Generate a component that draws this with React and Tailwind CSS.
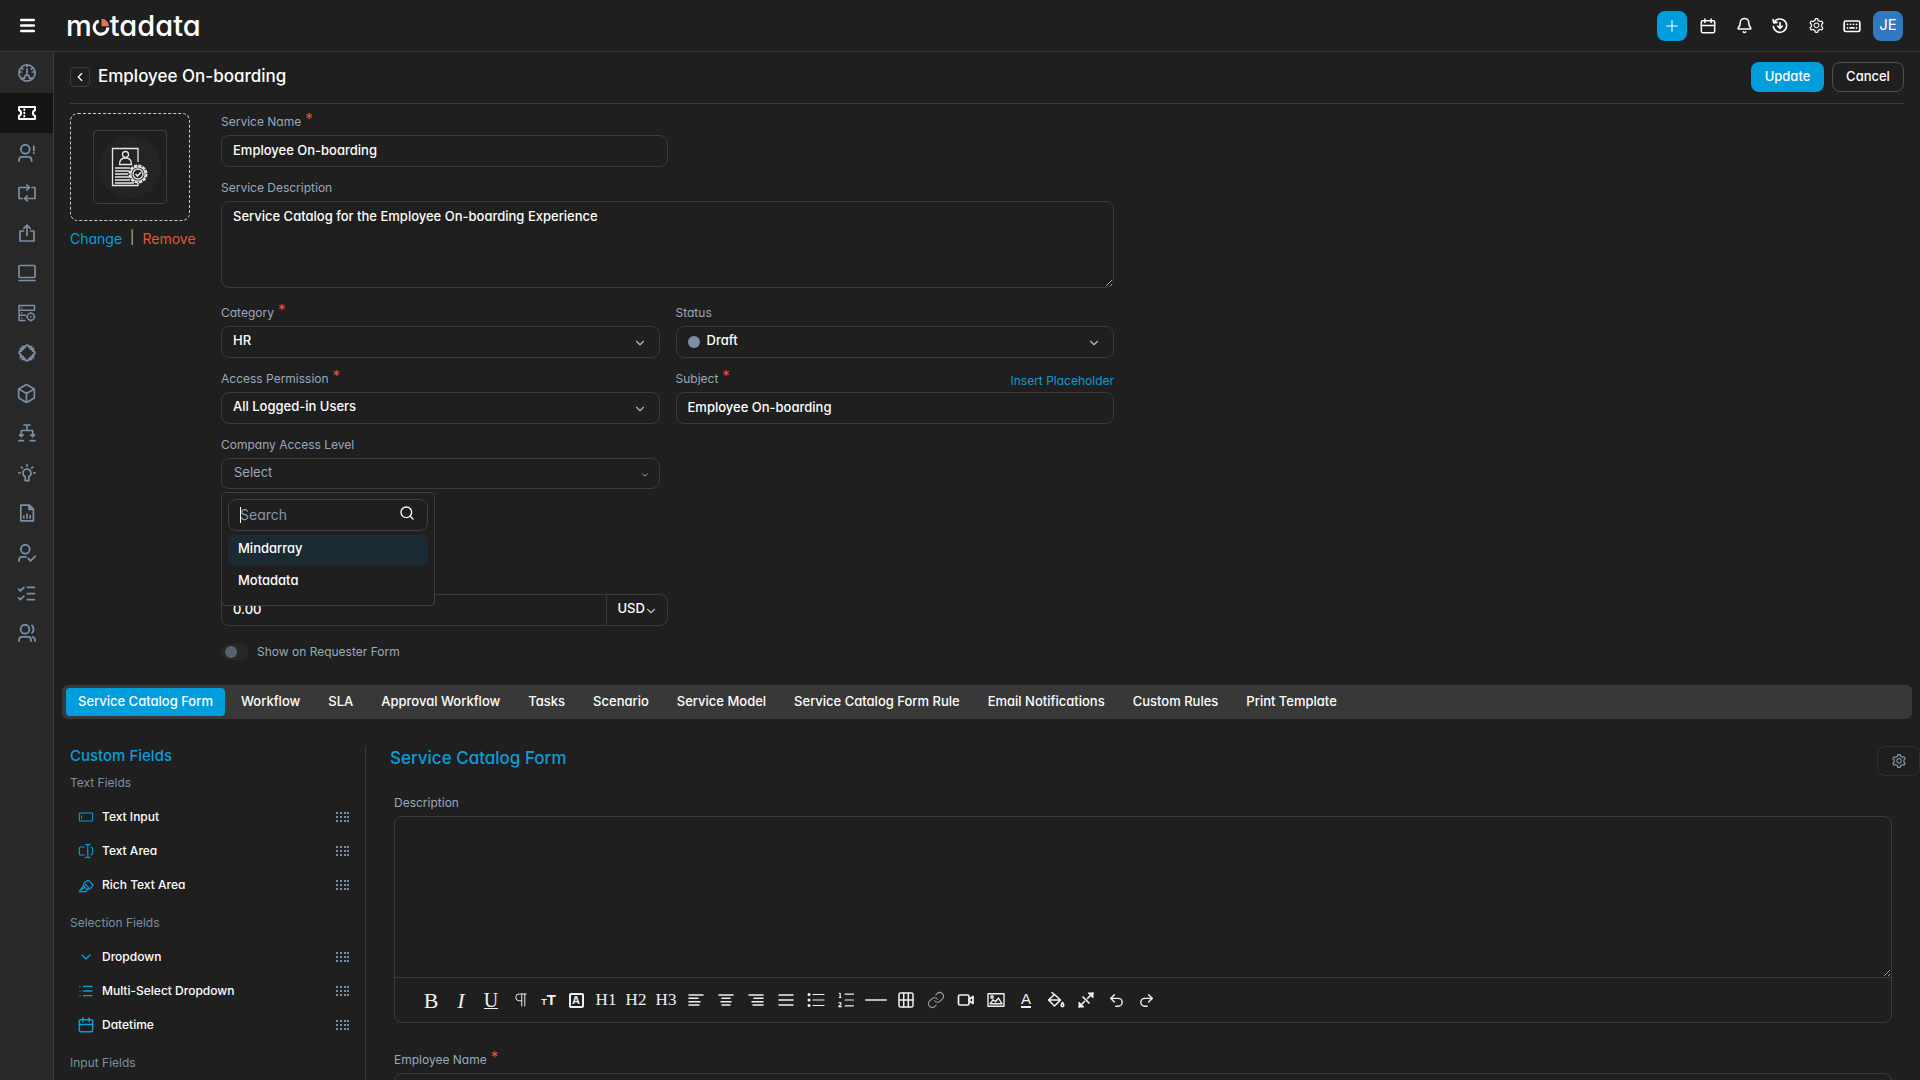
import { useState } from "react";
import { Box, ListChecks, ChevronDown, ChevronLeft, Search, Menu, Plus, Bell, Pilcrow, Link as LinkIcon, Undo2, Redo2, List, ListOrdered, TextCursorInput } from "lucide-react";
import { AiOutlineSetting } from "react-icons/ai";

const Svg = ({ size = 18, box = 18, width = 1.6, className, children }) => (
  <svg width={size} height={size} viewBox={`0 0 ${box} ${box}`} fill="none" stroke="currentColor" strokeWidth={width}
    strokeLinecap="round" strokeLinejoin="round" className={className} aria-hidden="true">
    {children}
  </svg>
);

const sideItems = [
  { name: "Dashboard", icon: <Svg width={1.7}><circle cx="9" cy="9" r="8.1" /><path d="M9 5.2v6M9 1.5v1.2M2 8h1.6M14.4 8H16M4 4.3l.8.8M14 4.3l-.8.8M3.4 14.3h3.2a2.5 2.5 0 1 1 4.8 0h3.2" /></Svg> },
  { name: "Requests", icon: <Svg width={2}><path d="M1 3h16v3.2c-1.4.4-2.1 1.4-2.1 2.8s.7 2.4 2.1 2.8V15H1v-3.2c1.4-.4 2.1-1.4 2.1-2.8S2.4 6.6 1 6.2z" /><path d="M6.3 5.5v.6M6.3 8.7v.6M6.3 11.9v.6" /></Svg> },
  { name: "Problems", icon: <Svg width={1.8}><circle cx="7.3" cy="5.2" r="4.4" /><path d="M1 17v-.8c0-2 1.5-3.3 3.3-3.3h6c1.800 0 3.300 1.300 3.300 3.300v.8M15.800 2.500v4M15.800 9v.2" /></Svg> },
  { name: "Changes", icon: <Svg width={1.7}><path d="M4 14.500H1V3.500h10.500M8.800 1l2.700 2.500L8.800 6M14 3.500h3v11H6.500M9.200 12l-2.700 2.500L9.200 17" /></Svg> },
  { name: "Releases", icon: <Svg width={1.7}><path d="M5.500 7H2v10h14V7h-3.500M9 11.500V1.200M5.800 4.300 9 1.200l3.200 3.100" /></Svg> },
  { name: "Assets", icon: <Svg width={1.7}><rect x="1" y="1.500" width="16" height="12" rx="1" /><path d="M1 16.500h16" /></Svg> },
  { name: "CMDB", icon: <Svg width={1.5}><path d="M7 16.500H1V1.500h15.500v4.700H1M1 11.300h6.500M3.600 3.900h.1M3.600 8.800h.1M3.600 13.900h.1" /><circle cx="12.800" cy="12.800" r="3.500" /><path d="M12.800 12.600v.4M12.800 8.700v.6M12.800 16.300v.6M8.700 12.800h.6M16.300 12.800h.6" /></Svg> },
  { name: "Patch", icon: <Svg width={1.9}><path d="M9 1.300c1.300 0 2 1 2 2l1.200-.6.6 2.500 2.500.6-.6 1.200c1 0 2 .7 2 2s-1 2-2 2l.6 1.200-2.500.6-.6 2.500-1.200-.6c0 1-.7 2-2 2s-2-1-2-2l-1.200.6-.6-2.500-2.500-.6.6-1.200c-1 0-2-.7-2-2s1-2 2-2l-.6-1.200 2.500-.6.6-2.500 1.200.6c0-1 .7-2 2-2z" /><path d="M4.300 2.500l1.200 1.200M2.500 4.300l1.200 1.200M13.700 2.500l-1.200 1.200M15.500 4.300l-1.200 1.200M4.300 15.500l1.200-1.200M2.500 13.700l1.200-1.200M13.700 15.500l-1.200-1.200M15.500 13.700l-1.200-1.200" /></Svg> },
  { name: "Packages", icon: <Box size={21} strokeWidth={1.9} /> },
  { name: "Deployment", icon: <Svg width={1.7}><path d="M6 1h6M9 1v5.500M3.300 12.500v-6h11.400v6M1.500 10.800l1.800 1.900 1.800-1.900M12.900 10.800l1.800 1.900 1.800-1.900M1 16.700h4.500M12.500 16.700H17" /></Svg> },
  { name: "Knowledge", icon: <Svg width={1.7}><path d="M7.200 16.700v-4.200c-1.500-.6-2.300-1.900-2.300-3.300a4.100 4.100 0 0 1 8.200 0c0 1.400-.8 2.700-2.300 3.300v4.200zM9 .9v1.300M.9 8.800h1.300M15.800 8.800h1.300M3.300 3.200l1 1M14.700 3.200l-1 1" /></Svg> },
  { name: "Reports", icon: <Svg width={1.7}><path d="M2.800 1.200h8.600l4 4v11.600H2.800z" /><path d="M11 1.500v4h4z" fill="currentColor" /><path d="M5.800 12v2M9 10v4M12.200 11.500V14" /></Svg> },
  { name: "Approvals", icon: <Svg width={1.8}><circle cx="7.300" cy="5.200" r="4.400" /><path d="M1 17v-.8c0-2 1.500-3.300 3.300-3.300H8M10.300 14.500l2.200 2.300 4.700-4.500" /></Svg> },
  { name: "Tasks", icon: <ListChecks size={21} strokeWidth={2} /> },
  { name: "Users", icon: <Svg width={1.8}><circle cx="7" cy="5.200" r="4.400" /><path d="M1 17v-.8c0-2 1.500-3.300 3.300-3.300h5.400c1.800 0 3.300 1.300 3.300 3.300v.8M14 1.500c2 1.800 2 5.600 0 7.400M14.500 13c1.600.4 2.500 1.600 2.500 3.200v.8" /></Svg> },
];

const HistoryIcon = () => (
  <Svg size={16} width={1.8}><path d="M2.200 5.300A7.500 7.500 0 1 1 1.500 9.500M1.200 1.800l.8 3.700 3.700-.6M9 5v6.500M6.500 9.200 9 11.600l2.500-2.400" /></Svg>
);

const CalendarIcon = ({ size = 16 }) => (
  <Svg size={size} width={1.7}><rect x="1.500" y="3" width="15" height="13.500" rx="1.500" /><path d="M1.500 8.500h15M5.500 1v4M12.500 1v4" /></Svg>
);

const KeyboardIcon = () => (
  <Svg size={18} width={1.7}><rect x="1.200" y="4" width="15.600" height="10.500" rx="1.500" /><path d="M4.500 7.300h.1M7.500 7.300h.1M10.500 7.300h.1M13.500 7.300h.1M4.500 10.900h.1M7.200 10.900h3.700M13.500 10.900h.1" /></Svg>
);

const topIcons = [
  { name: "Calendar", icon: <CalendarIcon /> },
  { name: "Notifications", icon: <Bell size={17} strokeWidth={2.2} /> },
  { name: "History", icon: <HistoryIcon /> },
  { name: "Settings", icon: <AiOutlineSetting size={17} /> },
  { name: "Shortcuts", icon: <KeyboardIcon /> },
];

const tabs = ["Service Catalog Form", "Workflow", "SLA", "Approval Workflow", "Tasks", "Scenario", "Service Model", "Service Catalog Form Rule", "Email Notifications", "Custom Rules", "Print Template"];

const fieldGroups = [
  {
    title: "Text Fields",
    fields: [
      { name: "Text Input", icon: <Svg size={16} width={1.2}><rect x="1.500" y="4.500" width="15" height="9" rx=".5" /><path d="M4 7.500v3" /></Svg> },
      { name: "Text Area", icon: <Svg size={16} width={1.3}><path d="M7 4.500H3A1.500 1.500 0 0 0 1.500 6v6A1.500 1.500 0 0 0 3 13.500h4M14.500 4.500c1.300.3 2 1 2 2.500v4c0 1.500-.7 2.200-2 2.500M8.500 1.500c1.500 0 2.500.3 2.500 1.500 0-1.200 1-1.500 2.500-1.500M8.500 16.500c1.500 0 2.500-.3 2.500-1.500 0 1.200 1 1.500 2.500 1.500M11 3v12" /></Svg> },
      { name: "Rich Text Area", icon: <Svg size={16} width={1.4}><path d="M1.500 16.500h7l2-2.500 3.500-1 3-4-5.500-5.500-4.500 3-1 3.500zM6 10l4.500 4M8.500 8.500l3.500 3.500M4 14l4-2.500" /></Svg> },
    ],
  },
  {
    title: "Selection Fields",
    fields: [
      { name: "Dropdown", icon: <ChevronDown size={16} strokeWidth={2} /> },
      { name: "Multi-Select Dropdown", icon: <List size={16} strokeWidth={2} /> },
      { name: "Datetime", icon: <CalendarIcon /> },
    ],
  },
  { title: "Input Fields", fields: [] },
];

const Lines = ({ rows }) => (
  <Svg size={16} box={16} width={1.5}>
    {rows.map(([from, to], i) => <path key={i} d={`M${from} ${3 + i * (10 / (rows.length - 1))}H${to}`} />)}
  </Svg>
);

const tools = [
  { name: "Bold", icon: <span className="text-[22px]">B</span> },
  { name: "Italic", icon: <span className="text-[22px] italic">I</span> },
  { name: "Underline", icon: <span className="border-b border-current text-[20px] leading-4">U</span> },
  { name: "Paragraph format", icon: <Pilcrow size={18} strokeWidth={1.3} /> },
  { name: "Font size", narrow: true, icon: <span className="font-['Liberation_Sans',sans-serif] text-[15px] font-bold"><span className="text-[9px]">T</span>T</span> },
  { name: "Font family", icon: <span className="flex size-[15px] items-center justify-center rounded-[2px] border-2 border-current font-['Liberation_Sans',sans-serif] text-[11px] font-bold">A</span> },
  { name: "Heading 1", icon: <span className="text-[17px]">H1</span> },
  { name: "Heading 2", icon: <span className="text-[17px]">H2</span> },
  { name: "Heading 3", icon: <span className="text-[17px]">H3</span> },
  { name: "Align left", icon: <Lines rows={[[1, 15], [1, 10], [1, 12], [1, 11]]} /> },
  { name: "Align center", icon: <Lines rows={[[1, 15], [4, 12], [3, 13], [4, 12]]} /> },
  { name: "Align right", icon: <Lines rows={[[1, 15], [6, 15], [4, 15], [5, 15]]} /> },
  { name: "Justify", icon: <Lines rows={[[1, 15], [1, 15], [1, 15]]} /> },
  { name: "Bulleted list", icon: <Svg size={18} width={1.2}><path d="M6 3.500h11M6 9h11M6 14.500h11" /><path d="M2 3.500h.1M2 9h.1M2 14.500h.1" strokeWidth="3" /></Svg> },
  { name: "Numbered list", icon: <ListOrdered size={20} strokeWidth={1.4} /> },
  { name: "Horizontal line", icon: <Svg size={22} box={22} width={1.3}><path d="M.7 11h20.600" /></Svg> },
  { name: "Table", icon: <Svg size={16} box={16} width={1.5}><rect x="1" y="1" width="14" height="14" rx="1.500" /><path d="M1 8h14M5.700 1v14M10.300 1v14" /></Svg> },
  { name: "Link", icon: <LinkIcon size={18} strokeWidth={1.4} className="text-[#a0a0a0]" /> },
  { name: "Video", icon: <Svg size={18} width={1.7}><rect x="1.500" y="4" width="10.500" height="10" rx="1.500" /><path d="M12 8.500l4-3v7l-4-3" /></Svg> },
  { name: "Image", icon: <Svg size={18} width={1.4}><rect x="1" y="2.800" width="16" height="12.500" /><path d="M3 12.800l3-4 2.500 2L11.500 7l3.500 5.800z" /><circle cx="5" cy="6" r="1.200" /></Svg> },
  { name: "Text color", icon: <span className="border-b-2 border-current font-['Liberation_Sans',sans-serif] text-[15px] leading-[14px]">A</span> },
  { name: "Fill color", icon: <Svg size={18} width={1.6}><path d="M5 1.500l2 2M7.500 3.500l6 5.500-6 6-6-6zM2 9h11.500" /><path d="M15.500 11.500c.8 1.400 1.300 2 1.300 2.800a1.300 1.300 0 0 1-2.600 0c0-.8.500-1.400 1.300-2.800z" /></Svg> },
  { name: "Expand", icon: <Svg size={18} width={1.7}><path d="M2 16l5.500-5.500M16 2l-5.500 5.500M6 6l6 6" /><path d="M11.500 2H16v4.500zM2 11.500V16h4.500z" fill="currentColor" strokeWidth="1" /></Svg> },
  { name: "Undo", icon: <Undo2 size={17} strokeWidth={2} /> },
  { name: "Redo", icon: <Redo2 size={17} strokeWidth={2} /> },
];

const inputClass = "h-8 w-full rounded-lg border border-[#3a3a3a] bg-transparent px-[11px] pb-0.5 text-[13px] font-medium text-white outline-none";

const Label = ({ children, htmlFor, required }) => (
  <label htmlFor={htmlFor} className="flex h-5 items-center gap-1 text-[12px] text-[#9aa8bd]">
    {children}
    {required && <span className="self-start text-[15px] leading-[14px] text-[#e5533d]">*</span>}
  </label>
);

const Field = ({ label, id, required, extra, children }) => (
  <div className="flex min-w-0 flex-col gap-[3px]">
    <div className="flex items-end justify-between">
      <Label htmlFor={id} required={required}>{label}</Label>
      {extra}
    </div>
    {children}
  </div>
);

const SelectBox = ({ id, options, dot }) => (
  <div className="relative">
    {dot && <span className="absolute top-2.5 left-3 size-3 rounded-full bg-[#7b8fa5]" />}
    <select id={id} className={`${inputClass} appearance-none ${dot ? "pl-[30px]" : ""}`}>
      {options.map((option) => <option key={option}>{option}</option>)}
    </select>
    <ChevronDown size={14} className="pointer-events-none absolute top-2.5 right-[13px] text-[#b4bfcc]" />
  </div>
);

const Handle = () => (
  <svg width="13" height="10" viewBox="0 0 13 10" fill="#7b8fa5" aria-hidden="true">
    {[0, 4, 8].map((y) => [0, 4, 8, 11].map((x) => <rect key={`${x}-${y}`} x={x} y={y} width="2" height="2" />))}
  </svg>
);

const ServicePicture = () => (
  <svg width="72" height="72" viewBox="0 0 72 72" fill="none" stroke="#e6e6e6" strokeWidth="1.3" aria-hidden="true">
    <circle cx="36" cy="36" r="31" fill="#242424" stroke="none" />
    <path d="M44 31V17.500H18.500v37H44v-3" />
    <circle cx="31.500" cy="23.500" r="3" />
    <path d="M25.500 33.500c0-4 2-6.500 6-6.500s6 2.500 6 6.500z" />
    <path d="M21 37h15M21 40h14M21 43h13M21 46h14M21 49h15M21 52h19" />
    <circle cx="44" cy="43" r="8.500" fill="#242424" strokeWidth="2" strokeDasharray="3.3 1.15" />
    <circle cx="44" cy="43" r="7.200" />
    <circle cx="44" cy="43" r="5" />
    <path d="M41.500 43l2 2 3.500-3.700" strokeWidth="1.6" />
  </svg>
);

const Logo = () => (
  <div className="flex items-baseline text-[29px] leading-8 font-medium text-white">
    m
    <svg width="18" height="18" viewBox="0 0 17 17" fill="none" aria-hidden="true">
      <path d="M6.300 2.900A6.400 6.400 0 1 0 14.900 9" stroke="#fff" strokeWidth="3" />
      <path d="M9 .8a7 7 0 0 1 7 7H9z" fill="#e8705f" />
    </svg>
    tadata
  </div>
);

const App = () => {
  const [activeTab, setActiveTab] = useState(tabs[0]);
  const [open, setOpen] = useState(true);
  const [search, setSearch] = useState("");

  return (
    <div className="flex h-screen flex-col bg-[#1f1f1f] font-[Inter,sans-serif] text-[13px] text-white [font-feature-settings:'cv11']">
      <header className="flex h-[52px] shrink-0 items-center justify-between border-b border-[#3a3a3a] pr-[17px]">
        <div className="flex items-center">
          <button aria-label="Menu" className="flex w-[54px] justify-center"><Menu size={19} strokeWidth={3} /></button>
          <div className="pl-3"><Logo /></div>
        </div>
        <div className="flex items-center gap-1.5">
          <button aria-label="Create" className="flex size-[30px] items-center justify-center rounded-lg bg-[#009ddc]"><Plus size={18} strokeWidth={1.5} /></button>
          {topIcons.map((item) => (
            <button key={item.name} aria-label={item.name} className="flex size-[30px] items-center justify-center">{item.icon}</button>
          ))}
          <button className="flex size-[30px] items-center justify-center rounded-lg bg-[#3078c0] text-[15px]">JE</button>
        </div>
      </header>

      <div className="flex min-h-0 flex-1">
        <nav className="flex w-[54px] shrink-0 flex-col border-r border-[#3a3a3a] bg-[#282828] pt-px">
          {sideItems.map((item, i) => (
            <a key={item.name} href="#" aria-label={item.name}
              className={`flex h-10 items-center justify-center ${i === 1 ? "bg-[#141414] text-white" : "text-[#7b8fa5]"}`}>
              {item.icon}
            </a>
          ))}
        </nav>

        <main className="min-w-0 flex-1 overflow-x-hidden overflow-y-auto [scrollbar-width:none]">
          <div className="mx-4 flex h-[52px] items-center justify-between border-b border-[#3a3a3a] pb-0.5">
            <div className="flex items-center gap-2">
              <button aria-label="Back" className="flex size-5 items-center justify-center rounded border border-[#3f3f3f]"><ChevronLeft size={14} /></button>
              <h1 className="text-[17px] font-medium">Employee On-boarding</h1>
            </div>
            <div className="flex gap-2">
              <button className="h-[30px] w-[73px] rounded-lg bg-[#009ddc] text-[13px] font-medium">Update</button>
              <button className="h-[30px] w-[72px] rounded-lg border border-[#505050] text-[13px] font-medium">Cancel</button>
            </div>
          </div>

          <section className="flex gap-[23px] px-4 pt-2">
            <div className="w-32 shrink-0 pt-px">
              <div className="flex h-[108px] w-[120px] items-center justify-center rounded-lg border border-dashed border-[#c3ccd6]">
                <div className="rounded border border-[#3f3f3f]"><ServicePicture /></div>
              </div>
              <div className="mt-[7px] flex h-5 items-center gap-2 text-[14px] whitespace-nowrap">
                <button className="text-[#099dd9]">Change</button>
                <span className="text-[13px] text-[#b4bfcc]">|</span>
                <button className="text-[#e5533d]">Remove</button>
              </div>
            </div>

            <div className="w-full max-w-[893px]">
              <div className="w-1/2">
                <Field label="Service Name" id="service-name" required>
                  <input id="service-name" defaultValue="Employee On-boarding" className={inputClass} />
                </Field>
              </div>
              <div className="mt-[11px]">
                <Field label="Service Description" id="service-description">
                  <textarea id="service-description" defaultValue="Service Catalog for the Employee On-boarding Experience"
                    className="h-[87px] w-full rounded-lg border border-[#3a3a3a] bg-transparent px-[11px] py-1 text-[13px] leading-5 font-medium outline-none" />
                </Field>
              </div>

              <div className="mt-[15px] grid grid-cols-2 gap-x-4 gap-y-[11px]">
                <Field label="Category" id="category" required>
                  <SelectBox id="category" options={["HR"]} />
                </Field>
                <Field label="Status" id="status">
                  <SelectBox id="status" options={["Draft"]} dot />
                </Field>
                <Field label="Access Permission" id="access" required>
                  <SelectBox id="access" options={["All Logged-in Users"]} />
                </Field>
                <Field label="Subject" id="subject" required
                  extra={<button className="h-4 text-[12px] leading-4 text-[#099dd9]">Insert Placeholder</button>}>
                  <input id="subject" defaultValue="Employee On-boarding" className={inputClass} />
                </Field>
                <Field label="Company Access Level" id="company">
                  <div className="relative">
                    <select id="company" onMouseDown={(e) => { e.preventDefault(); setOpen(!open); }}
                      className="block h-[31px] w-full appearance-none rounded-lg border border-[#3a3a3a] px-3 pb-0.5 text-[13px] text-[#9aa8bd] outline-none">
                      <option>Select</option>
                    </select>
                    <ChevronDown size={10} className="pointer-events-none absolute top-3 right-2.5 text-[#b4bfcc]" />
                    {open && (
                      <div className="absolute top-full left-0 z-10 mt-[3px] h-[114px] w-[214px] rounded border border-[#3f3f3f] bg-[#1f1f1f] p-1.5">
                        <div className="relative">
                          <input aria-label="Search" placeholder="Search" value={search} onChange={(e) => setSearch(e.target.value)}
                            className="block h-8 w-full rounded-lg border border-[#3f3f3f] bg-transparent px-[11px] pb-0.5 text-[14px] outline-none placeholder:text-[#8796ab]" />
                          <span className="absolute top-2 left-3 h-4 w-px bg-white" />
                          <Search size={16} className="pointer-events-none absolute top-1.5 right-[13px]" />
                        </div>
                        <ul className="mt-1 flex flex-col gap-0.5">
                          {["Mindarray", "Motadata"].map((name, i) => (
                            <li key={name}>
                              <button className={`block h-[30px] w-full rounded-md px-2.5 pb-0.5 text-left text-[13px] font-medium ${i === 0 ? "bg-[#1a2b33]" : ""}`}>{name}</button>
                            </li>
                          ))}
                        </ul>
                      </div>
                    )}
                  </div>
                </Field>
              </div>

              <div className="mt-[105px] flex w-1/2">
                <input aria-label="Cost" defaultValue="0.00" className="h-8 min-w-0 flex-1 rounded-l-lg border border-[#3a3a3a] px-[11px] pb-0.5 text-[13px] font-medium outline-none" />
                <div className="relative">
                  <select aria-label="Currency" className="block h-8 w-[61px] appearance-none rounded-r-lg border border-l-0 border-[#3a3a3a] pb-0.5 pl-[11px] text-[13px] font-medium outline-none">
                    <option>USD</option>
                  </select>
                  <ChevronDown size={14} className="pointer-events-none absolute top-2.5 right-[10px] text-[#b4bfcc]" />
                </div>
              </div>

              <div className="mt-4 flex h-5 items-center gap-2">
                <input id="requester" type="checkbox" role="switch"
                  className="h-4 w-7 appearance-none rounded-full bg-[#272727] before:m-0.5 before:ml-1 before:block before:size-3 before:rounded-full before:bg-[#56636e] checked:before:ml-3" />
                <label htmlFor="requester" className="text-[12px] text-[#9aa8bd]">Show on Requester Form</label>
              </div>
            </div>
          </section>

          <div role="tablist" className="mx-2 mt-[23px] flex gap-1 rounded-md bg-[#383838] px-1 py-[3px]">
            {tabs.map((tab) => (
              <button key={tab} role="tab" aria-selected={tab === activeTab} onClick={() => setActiveTab(tab)}
                className={`h-7 rounded px-3 text-[13px] font-medium whitespace-nowrap ${tab === activeTab ? "bg-[#009ddc]" : ""}`}>
                {tab}
              </button>
            ))}
          </div>

          <div className="mt-[27px] flex pl-4">
            <aside className="w-[296px] shrink-0 border-r border-[#3a3a3a] pr-4 pb-10">
              <h2 className="h-5 text-[15px] leading-5 font-medium text-[#099dd9]">Custom Fields</h2>
              {fieldGroups.map((group, i) => (
                <div key={group.title} className={i === 0 ? "mt-[7px]" : "mt-[11px]"}>
                  <h3 className="h-5 text-[12px] leading-5 text-[#7b8fa5]">{group.title}</h3>
                  <ul className="mt-[7px]">
                    {group.fields.map((field) => (
                      <li key={field.name} className="flex h-[34px] items-center gap-2 pl-2">
                        <span className="text-[#099dd9]">{field.icon}</span>
                        <span className="flex-1 text-[12px] font-medium">{field.name}</span>
                        <Handle />
                      </li>
                    ))}
                  </ul>
                </div>
              ))}
            </aside>

            <section className="min-w-0 flex-1 pl-6">
              <div className="flex items-start justify-between">
                <h2 className="text-[17px] leading-6 font-medium text-[#099dd9]">Service Catalog Form</h2>
                <button aria-label="Form settings" className="flex h-[30px] w-[43px] items-center justify-center rounded-lg border border-[#303030] text-[#8b9bb0]"><AiOutlineSetting size={16} /></button>
              </div>
              <div className="mt-[17px] mr-7 ml-1">
                <Field label="Description" id="description">
                  <div className="rounded-lg border border-[#3a3a3a]">
                    <textarea id="description" className="block h-40 w-full bg-transparent p-3 outline-none" />
                    <div className="flex h-[45px] items-center border-t border-[#3a3a3a] pl-[21px] font-['Liberation_Serif',serif] text-[#f0f0f0]">
                      {tools.map((tool) => (
                        <button key={tool.name} aria-label={tool.name} className={`flex h-8 items-center justify-center ${tool.narrow ? "w-[25px]" : "w-[30px]"}`}>{tool.icon}</button>
                      ))}
                    </div>
                  </div>
                </Field>
                <div className="mt-[27px]">
                  <Field label="Employee Name" id="employee-name" required>
                    <input id="employee-name" className={inputClass} />
                  </Field>
                </div>
              </div>
            </section>
          </div>
        </main>
      </div>
    </div>
  );
};

export default App;
